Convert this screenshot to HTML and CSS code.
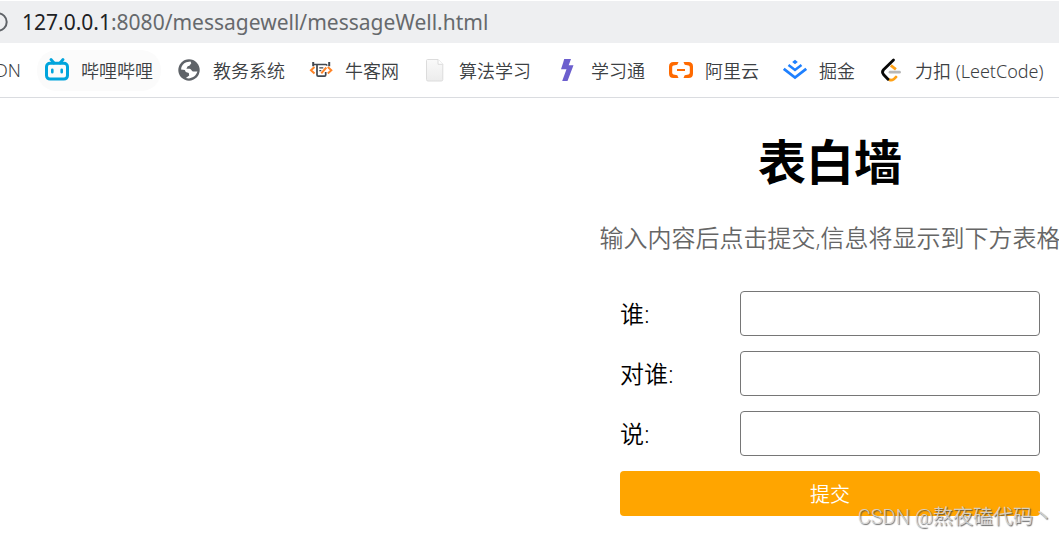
FILE: index.html
```html
<!DOCTYPE html>
<html lang="zh-CN">
<head>
<meta charset="utf-8">
<title>表白墙</title>
<link rel="stylesheet" href="styles.css">
</head>
<body>
<header>
  <div class="address">
    <svg class="info" viewBox="0 0 20 20" aria-hidden="true"><circle cx="10" cy="10" r="8.7" fill="none" stroke="#5f6368" stroke-width="2"/></svg>
    <div class="url"><span class="host">127.0.0.1</span>:8080/messagewell/messageWell.html</div>
  </div>
  <nav class="bookmarks">
    <a class="bookmark clipped" href="#">CSDN</a>
    <a class="bookmark active" href="#">
      <svg class="icon" viewBox="0 0 24 24"><path d="M6 1.5 9 5M18 1.5 15 5" stroke="#00a4dc" stroke-width="2.8" stroke-linecap="round"/><rect x="1.5" y="5.3" width="21" height="15.8" rx="3.5" fill="none" stroke="#00a4dc" stroke-width="3"/><path d="M7.3 11.7v2.6M16.7 11.7v2.6" stroke="#00a4dc" stroke-width="2.6" stroke-linecap="round"/></svg>
      哔哩哔哩</a>
    <a class="bookmark" href="#">
      <svg class="icon" viewBox="0 0 24 24"><circle cx="12" cy="12" r="10.7" fill="#5f6368"/><path d="M9.3 4.2 13.5 3.5 14.3 5.2 12.4 7.8 10.7 8.2 9.4 10.8H12.7C14.3 10.8 14.5 13.5 16 13.5H20.4C19.4 17.3 16.2 19.8 12 20.4L8.9 19.9 12.2 17.6 11.8 14.9 8.8 14.1 7.8 11.9 4 11.4C4.2 8 6.4 5.2 9.3 4.2Z" fill="#fff"/><path d="M15 5.5 16.9 5.4 19.5 9.5 17.4 10.4 15.7 8.1Z" fill="#5f6368"/></svg>
      教务系统</a>
    <a class="bookmark" href="#">
      <svg class="icon" viewBox="0 0 24 24" fill="none"><path d="M8 6.5V17q0 1.2 1.2 1.2h6.3q1.2 0 1.2-1.2v-3M4 6.5h13q.8 0 .8 1.2" stroke="#414850" stroke-width="1.7"/><path d="M10.3 9.8h4M10.3 12.6h2" stroke="#414850" stroke-width="1.3"/><path d="M4.2 4v4.2M20.2 4v4.2" stroke="#414850" stroke-width="2"/><path d="M5.5 9 2 12.2l3.5 3.2M18.8 9l3.5 3.2-3.5 3.2M17.3 9.5l-5 5.8" stroke="#ff8427" stroke-width="2"/></svg>
      牛客网</a>
    <a class="bookmark" href="#">
      <svg class="icon" viewBox="0 0 24 24"><defs><linearGradient id="paper" x2="0" y2="1"><stop stop-color="#fafafa"/><stop offset="1" stop-color="#ececec"/></linearGradient></defs><path d="M4.5 1.5H15L19.8 6.3V21.5q0 1.5-1.5 1.5H5Q3.5 23 3.5 21.5V2.5q0-1 1-1Z" fill="url(#paper)" stroke="#dcdcdc"/><path d="M15 1.5V6.3h4.8" fill="#fff" stroke="#dcdcdc"/></svg>
      算法学习</a>
    <a class="bookmark" href="#">
      <svg class="icon" viewBox="0 0 24 24"><path d="M9.2 1H16L13.7 7.2H18.5L12.5 23H7.2L11.5 11.2H6L8.2 4.6Z" fill="#6c5fce"/></svg>
      学习通</a>
    <a class="bookmark" href="#">
      <svg class="icon" viewBox="0 0 24 24" fill="#ff6a00"><path d="M9.5 4 8.3 6.8 4.5 7.6Q3.2 8 3.2 9.2v5.6q0 1.2 1.3 1.6l3.8.8L9.5 20H4.5Q0 20 0 15.5v-7Q0 4 4.5 4ZM14.5 4h5Q24 4 24 8.5v7Q24 20 19.5 20h-5l1.2-2.8 3.8-.8q1.3-.4 1.3-1.6V9.2q0-1.2-1.3-1.6l-3.8-.8Z"/><path d="M8 11h8v2H8z"/></svg>
      阿里云</a>
    <a class="bookmark" href="#">
      <svg class="icon" viewBox="0 0 24 24" fill="none" stroke="#1e80ff"><path d="m12 1.8 2.8 2.2L12 6.2 9.2 4Z" fill="#1e80ff" stroke="none"/><path d="m5.5 7 6.5 5 6.5-5" stroke-width="2.5"/><path d="m.8 10.8 11.2 8.8 11.2-8.8" stroke-width="2.7"/></svg>
      掘金</a>
    <a class="bookmark" href="#">
      <svg class="icon" viewBox="0 0 24 24" fill="none" stroke-width="2.8" stroke-linecap="round"><path d="m11.8 7.3 5.1 4" stroke="#ffa116" stroke-linecap="butt"/><path d="M10 21.5q3.5 2 7-2.5" stroke="#ffa116"/><path d="M11 14.2h9.5" stroke="#b8b8b8"/><path d="M14.5 2 4.5 11.8Q2.5 14 4.5 16.5L9 21.2" stroke="#080808"/></svg>
      力扣 (LeetCode)</a>
  </nav>
</header>
<main>
  <section class="wall">
    <h1>表白墙</h1>
    <p class="hint">输入内容后点击提交,信息将显示到下方表格</p>
    <form>
      <label for="from">谁:</label><input id="from" type="text">
      <label for="to">对谁:</label><input id="to" type="text">
      <label for="message">说:</label><input id="message" type="text">
      <button type="button">提交</button>
    </form>
  </section>
</main>
<div class="watermark">CSDN @熬夜磕代码丶</div>
</body>
</html>
```
FILE: styles.css
```css
* { box-sizing: border-box; }
body {
  margin: 0;
  position: relative;
  min-height: 100vh;
  overflow: hidden;
  background: #fff;
  color: #000;
  font-family: "Open Sans", "Noto Sans CJK SC", sans-serif;
  font-weight: 350;
}
header { border-bottom: 1px solid #dadce0; }
.address {
  display: flex;
  align-items: center;
  gap: 14px;
  height: 43px;
  border-top: 1px solid #fff;
  background: #eeeff1;
  overflow: hidden;
}
.info { flex: none; width: 20px; height: 20px; margin-left: -12px; }
.url {
  color: #66696c;
  font-family: "Noto Sans", sans-serif;
  font-size: 21px;
  font-weight: 400;
  white-space: nowrap;
}
.host { color: #202124; }
.bookmarks {
  display: flex;
  align-items: center;
  gap: 8px;
  height: 54px;
  overflow: hidden;
}
.bookmark {
  display: flex;
  flex: none;
  align-items: center;
  gap: 12px;
  height: 41px;
  padding: 0 8px;
  border-radius: 20px;
  color: #3c4043;
  font-family: "Noto Sans", "Noto Sans CJK SC", sans-serif;
  font-size: 18px;
  text-decoration: none;
  white-space: nowrap;
}
.clipped { justify-content: flex-end; width: 29px; overflow: hidden; border-radius: 0; }
.active { background: #fbfbfb; }
.icon { flex: none; width: 24px; height: 24px; }
main { display: grid; grid-template-columns: 1fr 458px; }
.wall {
  grid-column: 2;
  display: flex;
  flex-direction: column;
  align-items: center;
}
h1 { margin: 32px 0 0; font-size: 48px; line-height: 64px; }
.hint {
  margin: 28px 0 0;
  color: #666;
  font-size: 24px;
  line-height: 32px;
  white-space: nowrap;
}
form {
  display: grid;
  grid-template-columns: 120px 300px;
  gap: 15px 0;
  margin-top: 37px;
}
label { font-size: 24px; line-height: 45px; }
input {
  height: 45px;
  padding: 0 8px;
  border: 1px solid #767676;
  border-radius: 4px;
  background: #fff;
  font: inherit;
  font-size: 20px;
}
button {
  grid-column: 1 / -1;
  height: 45px;
  padding: 0;
  border: 0;
  border-radius: 4px;
  background: orange;
  color: #fff;
  font: inherit;
  font-size: 20px;
}
.watermark {
  position: absolute;
  right: 6px;
  bottom: 6px;
  color: rgba(215, 215, 215, 0.9);
  font-family: Roboto, "Noto Sans CJK SC", sans-serif;
  font-size: 20px;
  line-height: 28px;
  text-shadow: 1px 1px 1px rgba(70, 70, 70, 0.8);
  pointer-events: none;
}
```
